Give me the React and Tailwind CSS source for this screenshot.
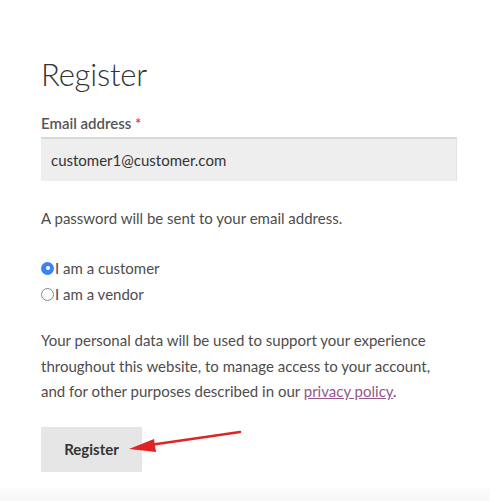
import React from "react";

export default function App() {
  return (
    <div className="w-[490px] h-[501px] bg-white relative overflow-hidden" style={{ fontFamily: "Lato, 'Noto Sans', sans-serif" }}>
      <div className="absolute left-0 right-0 bottom-0 h-[13px] bg-gradient-to-b from-[#fcfcfc] to-[#f8f8f8]" />
      <div className="relative pl-[41px] pr-[33px] pt-[54px] text-[15px] text-[#4d4d4d]">
        <h2 className="text-[31px] leading-[40px] font-light text-[#333] tracking-[-0.2px]">Register</h2>
        <label className="block mt-[19px] leading-[20px] font-semibold text-[#555]">
          Email address <span className="text-[#e2401c]">*</span>
        </label>
        <div className="mt-[4px] h-[44px] bg-[#eee] border-t-2 border-[#d7d7d7] border-r border-r-[#e3e3e3] flex items-center pl-[10px] text-[#333] text-[15px]">
          customer1@customer.com
        </div>
        <p className="mt-[27px] leading-[20px]">A password will be sent to your email address.</p>
        <div className="mt-[30px] flex flex-col gap-[6px]">
          <div className="flex items-center leading-[20px]">
            <span className="w-[13px] h-[13px] rounded-full bg-[#3b82f6] flex items-center justify-center mr-[1px]">
              <span className="w-[4px] h-[4px] rounded-full bg-white" />
            </span>
            <span>I am a customer</span>
          </div>
          <div className="flex items-center leading-[20px]">
            <span className="w-[13px] h-[13px] rounded-full border border-[#888] mr-[1px]" />
            <span>I am a vendor</span>
          </div>
        </div>
        <p className="mt-[24px] leading-[25.5px]">
          Your personal data will be used to support your experience throughout this website, to manage access to your account, and for other purposes described in our{" "}
          <a className="text-[#96588a] underline">privacy policy</a>.
        </p>
        <div className="mt-[22px]">
          <button className="w-[101px] h-[45px] bg-[#e6e6e6] font-bold text-[#333] text-[15px]">Register</button>
        </div>
      </div>
      <svg className="absolute left-0 top-0" width="490" height="501" viewBox="0 0 490 501">
        <line x1="240" y1="432" x2="150" y2="445" stroke="#e02424" strokeWidth="2.5" strokeLinecap="round" />
        <polygon points="129,449 154,439 156,452" fill="#e02424" />
      </svg>
    </div>
  );
}
